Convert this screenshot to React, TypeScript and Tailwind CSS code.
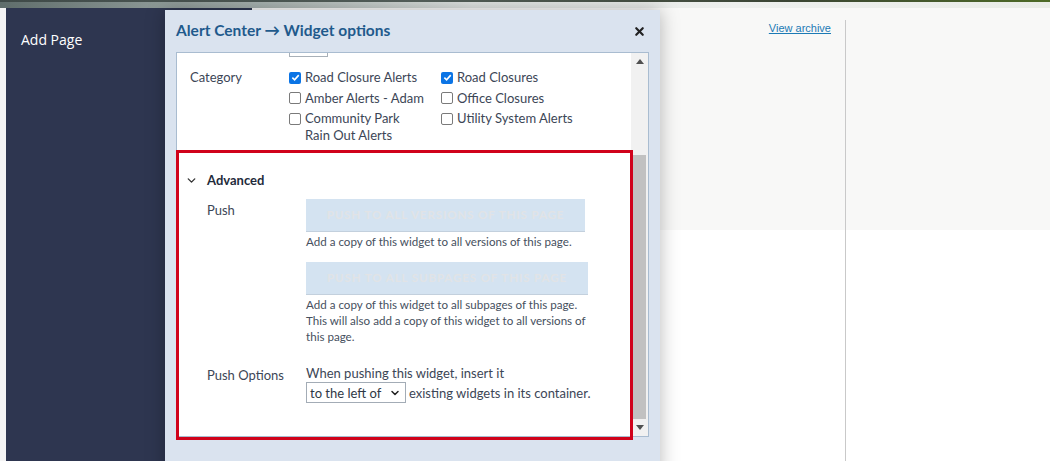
import { X, ChevronDown } from "lucide-react";

const ui = { fontFamily: "Lato, 'Noto Sans', sans-serif" };

function Box({ checked, label }: { checked?: boolean; label: React.ReactNode }) {
  return (
    <div className="flex items-start gap-[4px]">
      {checked ? (
        <span className="mt-[2.5px] flex h-[12px] w-[12px] shrink-0 items-center justify-center rounded-[2px] bg-[#0b74e5]">
          <svg width="9" height="9" viewBox="0 0 10 10">
            <path d="M1.5 5.2 L4 7.6 L8.6 2.4" fill="none" stroke="#fff" strokeWidth="1.8" />
          </svg>
        </span>
      ) : (
        <span className="mt-[2.5px] h-[12px] w-[12px] shrink-0 rounded-[2px] border border-[#7a7a7a] bg-white" />
      )}
      <span>{label}</span>
    </div>
  );
}

function PushButton({ text, w }: { text: string; w: string }) {
  return (
    <div
      className={`${w} flex h-[33px] items-center justify-center border-b border-[#c3d0dd] bg-[#d4e3f1] text-[11.5px] font-bold tracking-[0.9px] text-[#e1e3e6]`}
    >
      {text}
    </div>
  );
}

export default function App() {
  return (
    <div className="relative h-[461px] w-[1050px] overflow-hidden bg-white" style={ui}>
      {/* page behind the modal */}
      <div className="h-[8px] bg-[linear-gradient(to_right,#5f6d6b,#9aa6a3_20%,#dfe3e1_45%,#eef0ee_70%,#e9ece7)]">
        <div className="h-[2px] bg-[linear-gradient(to_right,#3f4a48,#56615c_40%,#3b4534_75%,#4d6a26)]" />
      </div>
      <div className="flex h-[453px]">
        <div className="w-[6px] bg-[#f4f4f4]" />
        <div className="w-[246px] bg-[#2e3650] pl-[15px] pt-[21px]">
          <div className="text-[14px] text-white" style={{ fontFamily: "'Open Sans', sans-serif" }}>
            Add Page
          </div>
        </div>
        <div className="flex flex-1 bg-[linear-gradient(to_bottom,#f8f8f7_222px,#ffffff_222px)]">
          <div className="w-[593px] pr-[14px] pt-[10px] text-right leading-[16px]">
            <span
              className="text-[11px] text-[#1c7ab5] underline"
              style={{ fontFamily: "'Liberation Sans', Arial, sans-serif" }}
            >
              View archive
            </span>
          </div>
          <div className="mt-[12px] flex-1 border-l border-[#c9c9c9]" />
        </div>
      </div>

      {/* modal */}
      <div className="absolute left-[165px] top-[10px] flex h-[470px] w-[495px] flex-col bg-[#dae3ef] shadow-[0_0_18px_rgba(0,0,0,0.28)]">
        <div className="flex h-[42px] items-center justify-between pl-[11px] pr-[14px]">
          <span className="text-[15.5px] font-bold text-[#1f5a8c]">Alert Center → Widget options</span>
          <X size={13} strokeWidth={4} className="text-[#222]" />
        </div>
        <div className="mx-[11px] flex h-[385px] border border-[#a9bcd0] bg-white">
          <div className="flex-1 overflow-hidden text-[13px] leading-[17px] text-[#3c4656]">
            <div className="ml-[112px] h-[4px] w-[39px] border-x border-b border-[#a8b0b8]" />
            <div className="mt-[12px] flex">
              <div className="w-[112px] pl-[13px]">Category</div>
              <div className="grid grid-cols-[152px_1fr] gap-y-[3.5px]">
                <Box checked label="Road Closure Alerts" />
                <Box checked label="Road Closures" />
                <Box label="Amber Alerts - Adam" />
                <Box label="Office Closures" />
                <Box
                  label={
                    <>
                      Community Park
                      <br />
                      Rain Out Alerts
                    </>
                  }
                />
                <Box label="Utility System Alerts" />
              </div>
            </div>

            <div className="mt-[28px] flex items-center pl-[8px]">
              <ChevronDown size={13} strokeWidth={2.5} className="text-[#333]" />
              <span className="ml-[9px] font-bold text-[#1f2b3b]">Advanced</span>
            </div>

            <div className="mt-[10px] flex">
              <div className="w-[129px] pl-[30px] pt-[3px]">Push</div>
              <div className="text-[11.6px] leading-[16px] text-[#46505e]">
                <PushButton text="PUSH TO ALL VERSIONS OF THIS PAGE" w="w-[279px]" />
                <div className="mt-[2px] whitespace-nowrap">Add a copy of this widget to all versions of this page.</div>
                <div className="mt-[12px]">
                  <PushButton text="PUSH TO ALL SUBPAGES OF THIS PAGE" w="w-[282px]" />
                </div>
                <div className="mt-[2px] whitespace-nowrap">
                  Add a copy of this widget to all subpages of this page.
                  <br />
                  This will also add a copy of this widget to all versions of
                  <br />
                  this page.
                </div>
              </div>
            </div>

            <div className="mt-[20px] flex">
              <div className="w-[129px] pl-[30px] pt-[2px]">Push Options</div>
              <div className="leading-[16px]">
                <div>When pushing this widget, insert it</div>
                <div className="mt-[1px] flex items-center">
                  <div className="flex h-[21px] w-[100px] items-center justify-between border border-[#a3acb6] pl-[3px] pr-[4px] text-[#2e3845]">
                    <span>to the left of</span>
                    <ChevronDown size={12} strokeWidth={3} className="text-[#222]" />
                  </div>
                  <span className="ml-[3px]">existing widgets in its container.</span>
                </div>
              </div>
            </div>
          </div>

          {/* scrollbar */}
          <div className="flex w-[17px] flex-col items-center bg-[#f1f1f1]">
            <div className="flex h-[17px] items-center justify-center">
              <svg width="8" height="5" viewBox="0 0 8 5">
                <path d="M0 5 L4 0 L8 5 Z" fill="#505050" />
              </svg>
            </div>
            <div className="mt-[85px] w-[13px] flex-1 bg-[#c1c1c1]" />
            <div className="flex h-[17px] items-center justify-center">
              <svg width="8" height="5" viewBox="0 0 8 5">
                <path d="M0 0 L4 5 L8 0 Z" fill="#505050" />
              </svg>
            </div>
          </div>
        </div>
      </div>

      {/* red annotation outline */}
      <div className="absolute left-[176px] top-[150px] h-[290px] w-[457px] border-[3px] border-[#d0021b]" />
    </div>
  );
}
